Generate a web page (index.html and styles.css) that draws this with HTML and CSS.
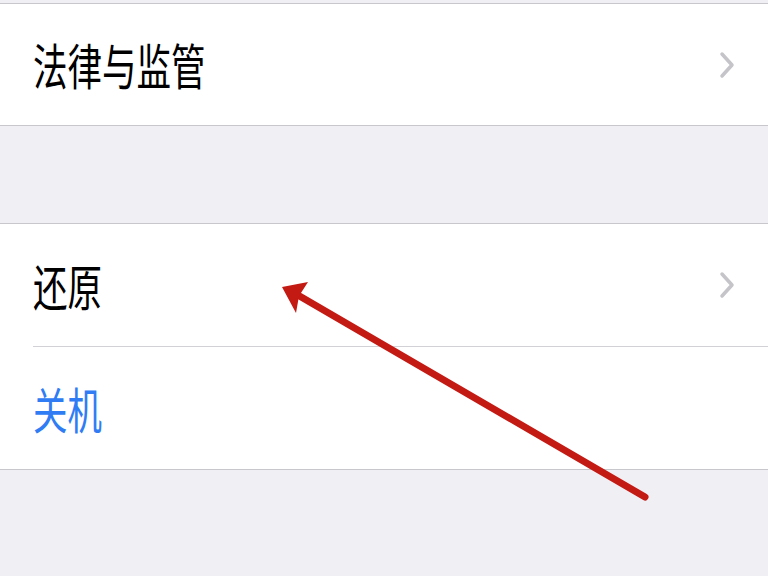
FILE: index.html
```html
<!DOCTYPE html>
<html lang="zh">
<head>
  <meta charset="UTF-8" />
  <meta name="viewport" content="width=device-width, initial-scale=1" />
  <title>通用</title>
  <link rel="stylesheet" href="styles.css">
</head>
<body>
  <div class="settings">
    <div class="group group-top">
      <div class="row">
        <span class="label">法律与监管</span>
        <svg class="chevron" width="16" height="28" viewBox="0 0 16 28">
          <polyline points="3,3 13,14 3,25" />
        </svg>
      </div>
    </div>

    <div class="group group-bottom">
      <div class="row">
        <span class="label">还原</span>
        <svg class="chevron" width="16" height="28" viewBox="0 0 16 28">
          <polyline points="3,3 13,14 3,25" />
        </svg>
      </div>
      <div class="row row-action">
        <span class="label">关机</span>
      </div>
    </div>
  </div>

  <!-- arrow drawn over the screenshot -->
  <svg class="arrow" width="768" height="576" viewBox="0 0 768 576">
    <line x1="645" y1="497" x2="296" y2="294" />
    <polygon points="282,287 308,282 299,296 296,313" />
  </svg>
</body>
</html>
```

FILE: styles.css
```css
html, body {
  margin: 0;
  padding: 0;
  height: 100%;
  overflow: hidden;
}

body {
  background: #efeff4;
  font-family: "Noto Sans CJK SC", "Noto Sans", sans-serif;
  color: #000;
  position: relative;
}

.settings {
  display: flex;
  flex-direction: column;
  padding-top: 3px;
}

.group {
  background: #fff;
  border-top: 1px solid #c8c7cc;
  border-bottom: 1px solid #c8c7cc;
}

.group-bottom {
  margin-top: 97px;
}

.row {
  height: 121px;
  display: flex;
  align-items: center;
  justify-content: space-between;
  padding: 0 33px 0 33px;
}

.group-bottom .row {
  height: 122px;
}

.row + .row {
  border-top: 1px solid #d1d1d6;
  margin-left: 33px;
  padding-left: 0;
}

.label {
  font-size: 34.5px;
  line-height: 1;
  display: inline-block;
  transform: scaleY(1.42);
  transform-origin: left center;
}

.row-action .label {
  color: #2f7cf5;
}

.chevron polyline {
  fill: none;
  stroke: #c4c4c9;
  stroke-width: 3.5;
  stroke-linecap: round;
  stroke-linejoin: round;
}

.arrow {
  position: absolute;
  top: 0;
  left: 0;
  pointer-events: none;
}

.arrow line {
  stroke: #c41a14;
  stroke-width: 7;
  stroke-linecap: round;
}

.arrow polygon {
  fill: #c41a14;
}
```
